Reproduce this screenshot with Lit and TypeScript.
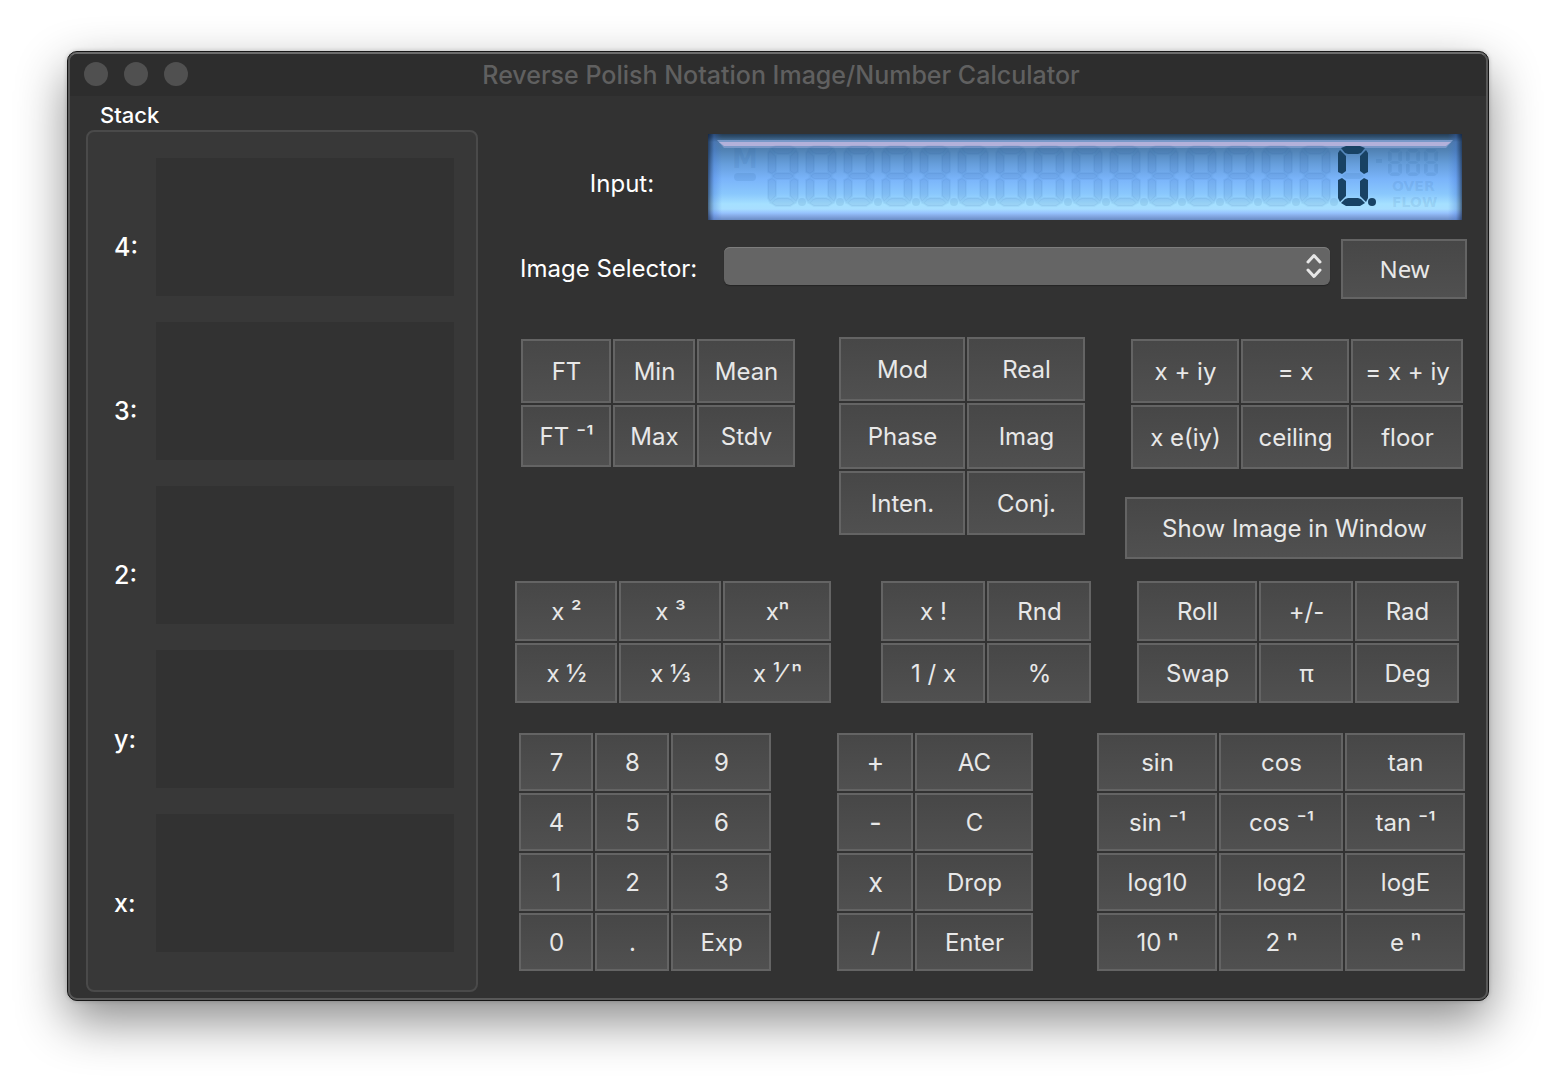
import { LitElement, html, svg, css } from "lit";
import { customElement, property, state } from "lit/decorators.js";
import { classMap } from "lit/directives/class-map.js";

const CELLS = 16;
const CELL_PITCH = 38;

/* Segment outlines inside a 30 x 60 cell, named a to g clockwise from the top. */
const SEGMENTS: Record<string, string> = {
  a: "3,2 8,0 22,0 27,2 23,7 20,8 10,8 7,7",
  b: "28,4 30,7 30,26 26,28 22,25 22,10",
  c: "26,32 30,34 30,52 28,56 22,50 22,35",
  d: "7,53 10,52 20,52 23,53 27,57 22,60 8,60 3,57",
  e: "4,32 8,35 8,50 2,56 0,52 0,34",
  f: "2,4 8,10 8,25 4,28 0,26 0,7",
  g: "4,30 8,27 22,27 26,30 22,33 8,33",
};

const DIGITS: Record<string, string> = {
  "0": "abcdef",
  "1": "bc",
  "2": "abged",
  "3": "abgcd",
  "4": "fgbc",
  "5": "afgcd",
  "6": "afgedc",
  "7": "abc",
  "8": "abcdefg",
  "9": "abcdfg",
};

@customElement("lcd-display")
export class LcdDisplay extends LitElement {
  @property() value = "0.";

  static styles = css`
    :host {
      display: block;
      height: 86px;
      background:
        linear-gradient(
          to right,
          rgba(15, 30, 60, 0.65) 0,
          rgba(20, 45, 95, 0.4) 3px,
          rgba(60, 110, 210, 0.3) 6px,
          rgba(60, 110, 210, 0) 14px calc(100% - 14px),
          rgba(60, 110, 210, 0.3) calc(100% - 6px),
          rgba(20, 45, 95, 0.4) calc(100% - 3px),
          rgba(15, 30, 60, 0.65) 100%
        ),
        linear-gradient(
          #243d57 0,
          #30506f 3px,
          #4f7ba8 8px,
          #5182b4 16px,
          #669edb 30px,
          #7ab4fa 45px,
          #8ac8fd 60px,
          #a5e0ff 70px,
          #a8deff 75px,
          #96c2fd 79px,
          #85a9e4 82px,
          #6a8cc4 86px
        );
    }
    svg {
      display: block;
      width: 100%;
      height: 86px;
    }
    .shine {
      fill: #b3b1da;
    }
    .shine-edge {
      fill: #7898c8;
    }
    .ghost {
      fill: #1c4f8c;
      fill-opacity: 0.09;
      stroke: #1c4f8c;
      stroke-opacity: 0.05;
      stroke-width: 2;
    }
    .dim {
      fill: #1c4f8c;
      fill-opacity: 0.11;
    }
    .lit {
      fill: #184264;
    }
    .memory {
      font: bold 26px "DejaVu Sans", sans-serif;
    }
    .flag {
      font: bold 14px "DejaVu Sans", sans-serif;
    }
  `;

  private cell(index: number, digit: string, point: boolean) {
    const on = DIGITS[digit] ?? "";
    const off = on ? "dim" : "ghost";
    const x = 60 + index * CELL_PITCH;
    return svg`<g transform="translate(${x} 12)">
      ${Object.entries(SEGMENTS).map(
        ([name, points]) =>
          svg`<polygon class=${on.includes(name) ? "lit" : off} points=${points}></polygon>`
      )}
      <circle class=${point ? "lit" : "dim"} cx="34" cy="56" r="4"></circle>
    </g>`;
  }

  render() {
    const cells: { digit: string; point: boolean }[] = [];
    for (const ch of this.value) {
      if (ch === "." && cells.length) cells[cells.length - 1].point = true;
      else cells.push({ digit: ch, point: false });
    }
    while (cells.length < CELLS) cells.unshift({ digit: "", point: false });
    return html`<svg viewBox="0 0 754 86" preserveAspectRatio="none" role="img" aria-label=${this.value}>
      <polygon class="shine-edge" points="9,6 745,6 738,14 16,14"></polygon>
      <polygon class="shine" points="11,8 743,8 738,12 16,12"></polygon>
      <text class="dim memory" x="24" y="34">M</text>
      <rect class="dim" x="26" y="39" width="22" height="8" rx="4"></rect>
      ${cells.slice(-CELLS).map((c, i) => this.cell(i, c.digit, c.point))}
      <rect class="dim" x="668" y="25" width="6" height="4"></rect>
      ${[680, 698, 716].map(
        (x) => svg`<g transform="translate(${x} 15) scale(.467 .45)">
          ${Object.values(SEGMENTS).map((p) => svg`<polygon class="dim" points=${p}></polygon>`)}
        </g>`
      )}
      <text class="dim flag" x="684" y="57">OVER</text>
      <text class="dim flag" x="684" y="73">FLOW</text>
    </svg>`;
  }
}

@customElement("key-pad")
export class KeyPad extends LitElement {
  @property({ type: Array }) keys: string[] = [];
  @property({ reflect: true }) kind = "";

  static styles = css`
    :host {
      display: grid;
      gap: 2px;
    }
    :host([kind="stats"]) {
      grid-template: 64px 62px / 90fr 82fr 98fr;
    }
    :host([kind="parts"]) {
      grid-template: 64px 66px 64px / 126fr 118fr;
    }
    :host([kind="complex"]) {
      grid-template: 64px 64px / 108fr 108fr 112fr;
    }
    :host([kind="powers"]) {
      grid-template: 60px 60px / 102fr 102fr 108fr;
    }
    :host([kind="misc"]) {
      grid-template: 60px 60px / 1fr 1fr;
    }
    :host([kind="stack"]) {
      grid-template: 60px 60px / 120fr 94fr 104fr;
    }
    :host([kind="digits"]) {
      grid-template: repeat(4, 58px) / 74fr 74fr 100fr;
    }
    :host([kind="operators"]) {
      grid-template: repeat(4, 58px) / 76fr 118fr;
    }
    :host([kind="functions"]) {
      grid-template: repeat(4, 58px) / 120fr 124fr 120fr;
    }
    :host([kind="single"]) {
      grid-template: minmax(60px, 1fr) / 1fr;
    }
    button {
      min-width: 0;
      margin: 0;
      padding: 2px 0 0 1px;
      border: 2px solid #646464;
      border-radius: 0;
      background: linear-gradient(#474747, #505050);
      color: #e8e8e8;
      font: 24px/32px Inter, "Noto Sans", sans-serif;
      white-space: nowrap;
    }
    button:active {
      background: #6a6a6a;
    }
    .operator {
      font-size: 27px;
    }
    .humanist {
      padding-top: 0;
      font-family: "Noto Sans", sans-serif;
    }
  `;

  private press(key: string) {
    this.dispatchEvent(new CustomEvent("key", { detail: key, bubbles: true, composed: true }));
  }

  render() {
    return this.keys.map(
      (key) => html`<button
        type="button"
        class=${classMap({ operator: "+-x/".includes(key), humanist: key === "New" })}
        @click=${() => this.press(key)}
      >${key}</button>`
    );
  }
}

@customElement("app-root")
export class AppRoot extends LitElement {
  @state() private entry = "";

  static styles = css`
    :host {
      display: block;
      padding: 51px 67px 83px;
      background: #fff;
      color: #fff;
      font: 24px/32px Inter, "Noto Sans", sans-serif;
    }
    .window {
      border: 1px solid #161616;
      border-radius: 10px;
      background: #323232;
      box-shadow:
        0 0 4px rgba(0, 0, 0, 0.2),
        0 20px 50px rgba(0, 0, 0, 0.46);
    }
    .frame {
      border: 2px solid #585858;
      border-top-color: #6c6c6c;
      border-radius: 9px;
      overflow: hidden;
    }
    .titlebar {
      display: grid;
      grid-template-columns: 1fr auto 1fr;
      align-items: center;
      height: 42px;
      padding: 0 8px 0 14px;
      background: #2d2d2d;
    }
    .lights {
      display: flex;
      gap: 16px;
      padding-bottom: 2px;
    }
    .light {
      width: 24px;
      height: 24px;
      padding: 0;
      border: 0;
      border-radius: 50%;
      background: #505050;
    }
    h1 {
      margin: 0;
      color: #606060;
      font-size: 25px;
      font-weight: 500;
    }
    main {
      display: grid;
      grid-template-columns: 392fr 952fr;
      column-gap: 37px;
      padding: 0 19px 6px 16px;
    }
    .stack {
      display: flex;
      flex-direction: column;
    }
    h2 {
      margin: 0;
      padding: 5px 14px 1px;
      font-size: 22px;
      font-weight: 500;
      line-height: 28px;
    }
    .registers {
      display: grid;
      flex: 1;
      align-content: start;
      row-gap: 26px;
      padding: 26px 22px 38px 26px;
      border: 2px solid #4a4a4a;
      border-radius: 8px;
      background: #383838;
    }
    .register {
      display: grid;
      grid-template-columns: 42px 1fr;
      align-items: center;
      height: 138px;
    }
    .register-name {
      padding-top: 40px;
      font-size: 25px;
      font-weight: 500;
    }
    .register-view {
      height: 100%;
      background: #323232;
    }
    .controls {
      display: flex;
      flex-direction: column;
      padding-top: 38px;
    }
    .input-row {
      display: grid;
      grid-template-columns: 193fr 754fr;
      align-items: center;
      padding: 0 5px 19px 0;
    }
    .input-label {
      padding: 13px 0 0 21px;
      text-align: center;
    }
    .selector-row {
      display: grid;
      grid-template-columns: auto 1fr 126px;
      align-items: center;
      height: 60px;
      padding-left: 5px;
    }
    .selector-row label {
      width: 204px;
    }
    .picker {
      display: grid;
      align-items: center;
      margin: 0 11px 6px 0;
    }
    .picker > * {
      grid-area: 1 / 1;
    }
    select {
      width: 100%;
      height: 38px;
      padding: 0 36px 0 12px;
      border: 0;
      border-radius: 6px;
      appearance: none;
      background: #656565;
      box-shadow: inset 0 1px #7d7d7d, 0 1px 1px #242424;
      color: #e3e3e3;
      font: inherit;
    }
    .arrows {
      justify-self: end;
      width: 16px;
      height: 26px;
      margin-right: 8px;
      fill: none;
      stroke: #e6e6e6;
      stroke-width: 3;
      stroke-linecap: round;
      stroke-linejoin: round;
      pointer-events: none;
    }
    .new {
      align-self: stretch;
    }
    .row {
      display: grid;
      align-items: start;
    }
    .image-row {
      grid-template-columns: 274fr 44fr 246fr 40fr 338fr;
      padding: 38px 4px 22px 6px;
    }
    .image-row > :first-child {
      margin-top: 2px;
    }
    .number-row {
      grid-template-columns: 316fr 50fr 210fr 46fr 322fr;
      padding: 0 8px 30px 0;
    }
    .pad-row {
      grid-template-columns: 252fr 66fr 196fr 64fr 368fr;
      padding: 0 2px 0 4px;
    }
    .row > :nth-child(2) {
      grid-column: 3;
    }
    .row > :nth-child(3) {
      grid-column: 5;
    }
    .complex {
      display: flex;
      flex-direction: column;
      gap: 28px;
      padding-top: 2px;
    }
    .complex > :first-child {
      margin-left: 6px;
    }
    .show {
      height: 62px;
    }
  `;

  private onKey(event: CustomEvent<string>) {
    const key = event.detail;
    if (/^[0-9]$/.test(key)) {
      if (this.entry.replace(".", "").length < CELLS) this.entry += key;
    } else if (key === ".") {
      if (!this.entry.includes(".")) this.entry = (this.entry || "0") + ".";
    } else if (key === "C" || key === "AC") {
      this.entry = "";
    }
  }

  render() {
    const entry = this.entry || "0";
    const shown = entry.includes(".") ? entry : entry + ".";
    return html`
      <div class="window"><div class="frame">
        <header class="titlebar">
          <div class="lights">
            ${["Close", "Minimize", "Zoom"].map(
              (name) => html`<button type="button" class="light" aria-label=${name}></button>`
            )}
          </div>
          <h1>Reverse Polish Notation Image/Number Calculator</h1>
        </header>
        <main @key=${this.onKey}>
          <section class="stack">
            <h2>Stack</h2>
            <div class="registers">
              ${["4:", "3:", "2:", "y:", "x:"].map(
                (name) => html`<div class="register">
                  <span class="register-name">${name}</span>
                  <div class="register-view"></div>
                </div>`
              )}
            </div>
          </section>
          <section class="controls">
            <div class="input-row">
              <span class="input-label">Input:</span>
              <lcd-display .value=${shown}></lcd-display>
            </div>
            <div class="selector-row">
              <label for="image">Image Selector:</label>
              <div class="picker">
                <select id="image"></select>
                <svg class="arrows" viewBox="0 0 16 26" aria-hidden="true">
                  <path d="M2 9 8 2.5 14 9M2 17 8 23.500 14 17"></path>
                </svg>
              </div>
              <key-pad class="new" kind="single" .keys=${["New"]}></key-pad>
            </div>
            <div class="row image-row">
              <key-pad kind="stats" .keys=${["FT", "Min", "Mean", "FT ⁻¹", "Max", "Stdv"]}></key-pad>
              <key-pad kind="parts" .keys=${["Mod", "Real", "Phase", "Imag", "Inten.", "Conj."]}></key-pad>
              <div class="complex">
                <key-pad kind="complex" .keys=${["x + iy", "= x", "= x + iy", "x e(iy)", "ceiling", "floor"]}></key-pad>
                <key-pad class="show" kind="single" .keys=${["Show Image in Window"]}></key-pad>
              </div>
            </div>
            <div class="row number-row">
              <key-pad kind="powers" .keys=${["x ²", "x ³", "xⁿ", "x ½", "x ⅓", "x ¹⁄ ⁿ"]}></key-pad>
              <key-pad kind="misc" .keys=${["x !", "Rnd", "1 / x", "%"]}></key-pad>
              <key-pad kind="stack" .keys=${["Roll", "+/-", "Rad", "Swap", "π", "Deg"]}></key-pad>
            </div>
            <div class="row pad-row">
              <key-pad kind="digits" .keys=${["7", "8", "9", "4", "5", "6", "1", "2", "3", "0", ".", "Exp"]}></key-pad>
              <key-pad kind="operators" .keys=${["+", "AC", "-", "C", "x", "Drop", "/", "Enter"]}></key-pad>
              <key-pad
                kind="functions"
                .keys=${["sin", "cos", "tan", "sin ⁻¹", "cos ⁻¹", "tan ⁻¹", "log10", "log2", "logE", "10 ⁿ", "2 ⁿ", "e ⁿ"]}
              ></key-pad>
            </div>
          </section>
        </main>
      </div></div>
    `;
  }
}
